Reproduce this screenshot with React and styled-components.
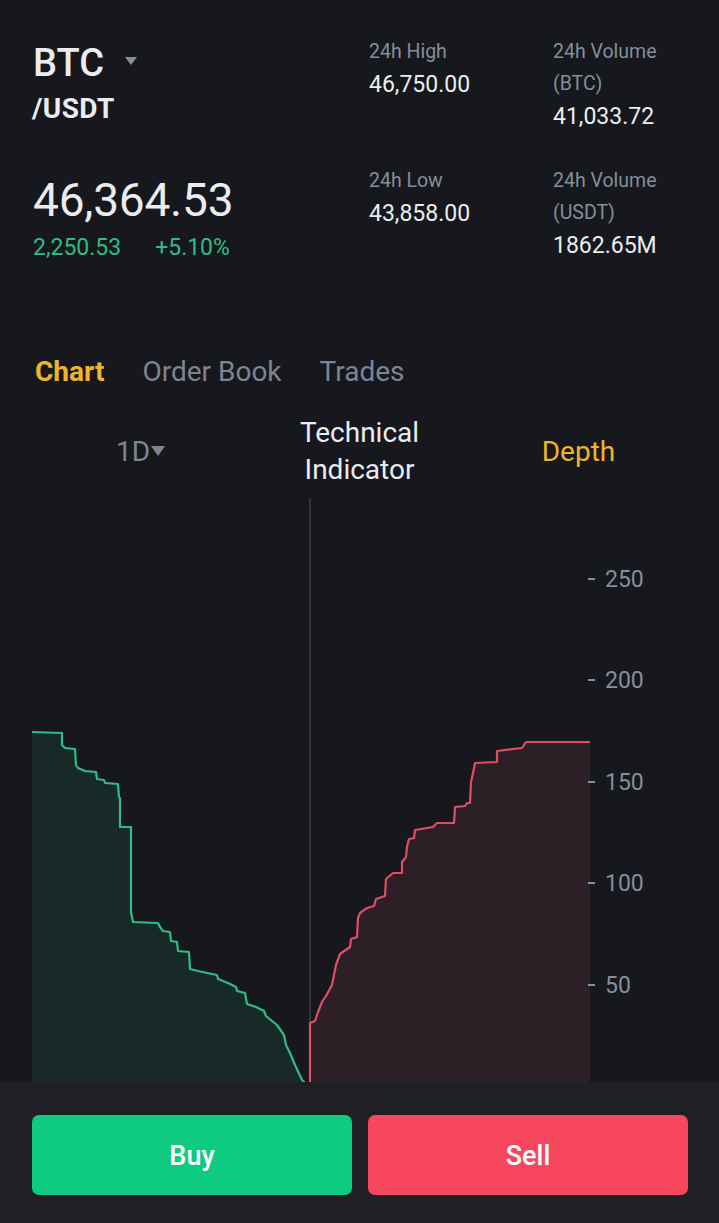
import React from 'react';
import styled, {createGlobalStyle} from 'styled-components';

const GlobalStyle = createGlobalStyle`
  html, body {
    margin: 0;
    padding: 0;
    background: #16181d;
  }
  * {
    box-sizing: border-box;
  }
`

const Page = styled.div`
  width: 719px;
  height: 1223px;
  background: #16181d;
  font-family: Roboto, "Noto Sans", sans-serif;
  color: #eaecef;
  display: flex;
  flex-direction: column;
  overflow: hidden;
`

const Header = styled.div`
  display: flex;
  align-items: flex-start;
  padding: 34px 0 0 33px;
  height: 355px;
`

const PairCol = styled.div`
  width: 336px;
  padding-top: 6px;
  display: flex;
  flex-direction: column;
`

const PairRow = styled.div`
  display: flex;
  align-items: flex-start;
`

const Base = styled.span`
  font-size: 38px;
  line-height: 46px;
  font-weight: 500;
`

const Caret = styled.span`
  width: 0;
  height: 0;
  margin: 17px 0 0 21px;
  border-left: 6.5px solid transparent;
  border-right: 6.5px solid transparent;
  border-top: 8px solid #848e9c;
`

const Quote = styled.div`
  font-size: 28px;
  line-height: 32px;
  font-weight: 700;
  letter-spacing: 0.4px;
  margin-top: 7px;
  margin-left: -1px;
`

const Price = styled.div`
  font-size: 46px;
  line-height: 54px;
  margin-top: 48px;
  letter-spacing: -0.2px;
`

const ChangeRow = styled.div`
  display: flex;
  gap: 34px;
  font-size: 23px;
  line-height: 28px;
  margin-top: 7px;
  color: #2ebd85;
`

const Stats = styled.div`
  display: grid;
  grid-template-columns: 184px 150px;
  align-content: start;
  row-gap: 32px;
  margin-top: 2px;
`

const Stat = styled.div`
  display: flex;
  flex-direction: column;
`

const Label = styled.div`
  font-size: 19.5px;
  line-height: 32px;
  color: #848e9c;
  padding-right: 20px;
`

const Value = styled.div`
  font-size: 23px;
  line-height: 32px;
  margin-top: 1px;
  color: #eaecef;
`

const Tabs = styled.div`
  display: flex;
  gap: 38px;
  padding-left: 35px;
  height: 57px;
`

const Tab = styled.div`
  font-size: 28px;
  line-height: 34px;
  font-weight: ${({active}) => active ? 700 : 400};
  color: ${({active}) => active ? '#ecb52a' : '#7d8594'};
`

const Toolbar = styled.div`
  display: grid;
  grid-template-columns: repeat(3, 1fr);
  padding: 0 31px;
  height: 78px;
  align-items: center;
  justify-items: center;
`

const ToolItem = styled.div`
  display: flex;
  align-items: flex-start;
  text-align: center;
  font-size: 28px;
  line-height: 37px;
  color: ${({tone}) => tone === 'gold' ? '#ecb52a' : tone === 'white' ? '#eaecef' : '#7d8594'};
`

const SmallCaret = styled.span`
  width: 0;
  height: 0;
  margin: 13px 0 0 1px;
  border-left: 7px solid transparent;
  border-right: 7px solid transparent;
  border-top: 10px solid #7d8594;
`

const ChartBox = styled.div`
  height: 584px;
  margin-top: 8px;
  svg {
    display: block;
  }
`

const AxisText = styled.text`
  font-family: Roboto, "Noto Sans", sans-serif;
  font-size: 23px;
  fill: #848e9c;
`

const BottomBar = styled.div`
  flex: 1;
  background: #1f2025;
  display: flex;
  gap: 16px;
  padding: 33px 31px 0 32px;
`

const TradeButton = styled.button`
  flex: 1;
  height: 80px;
  padding-top: 3px;
  border: none;
  border-radius: 7px;
  background: ${({side}) => side === 'buy' ? '#0ecb81' : '#f6465d'};
  color: #ffffff;
  font-family: Roboto, "Noto Sans", sans-serif;
  font-size: 27px;
  font-weight: 500;
`

const BIDS = [
    [32, 732], [62, 733], [62, 745], [65, 748], [75, 749], [76, 765], [78, 768], [85, 771], [96, 772],
    [97, 779], [104, 780], [105, 783], [118, 784], [119, 797], [120, 798], [120, 827], [131, 827],
    [131, 912], [133, 922], [158, 923], [160, 927], [163, 931], [170, 932], [171, 941], [177, 942],
    [178, 951], [189, 952], [190, 969], [198, 971], [217, 975], [218, 979], [228, 983], [236, 987],
    [237, 991], [245, 993], [247, 1004], [256, 1007], [264, 1011], [266, 1016], [272, 1021],
    [277, 1025], [284, 1035], [286, 1045], [290, 1053], [295, 1065], [302, 1080], [305, 1083],
]

const ASKS = [
    [310, 1083], [310, 1023], [315, 1021], [318, 1012], [322, 1002], [326, 996], [332, 985],
    [336, 965], [340, 954], [350, 947], [351, 939], [357, 937], [358, 918], [360, 913], [367, 908],
    [374, 906], [376, 899], [385, 896], [386, 879], [393, 873], [402, 873], [402, 862], [406, 857],
    [407, 847], [409, 839], [414, 838], [415, 830], [433, 827], [437, 823], [454, 823], [455, 807],
    [465, 806], [467, 803], [470, 803], [471, 782], [473, 773], [475, 763], [497, 762], [497, 751],
    [522, 748], [526, 742], [590, 742],
]

const TICKS = [[250, 579], [200, 680], [150, 782], [100, 883], [50, 985]]

const toPath = (pts) => pts.map((p, i) => `${i ? 'L' : 'M'}${p[0]} ${p[1]}`).join(' ')

const DepthChart = () => (
    <ChartBox>
        <svg width="719" height="584" viewBox="0 498 719 584">
            <path d={`${toPath(BIDS)} L305 1082 L32 1082 Z`} fill="#172a27"/>
            <path d={`${toPath(ASKS)} L590 1082 L310 1082 Z`} fill="#2c1f25"/>
            <line x1="310" y1="498" x2="310" y2="1082" stroke="#3b3e46" strokeWidth="1.5"/>
            <path d={toPath(BIDS)} fill="none" stroke="#2ebd85" strokeWidth="2.2" strokeLinejoin="round"/>
            <path d={toPath(ASKS)} fill="none" stroke="#e14d62" strokeWidth="2.2" strokeLinejoin="round"/>
            {TICKS.map(([v, y]) => (
                <g key={v}>
                    <line x1="588" y1={y} x2="595" y2={y} stroke="#848e9c" strokeWidth="2"/>
                    <AxisText x="605" y={y + 8}>{v}</AxisText>
                </g>
            ))}
        </svg>
    </ChartBox>
)

const STATS = [
    {label: '24h High', value: '46,750.00'},
    {label: '24h Volume (BTC)', value: '41,033.72'},
    {label: '24h Low', value: '43,858.00'},
    {label: '24h Volume (USDT)', value: '1862.65M'},
]

const App = () => {
    return (
        <Page>
            <GlobalStyle/>
            <Header>
                <PairCol>
                    <PairRow>
                        <Base>BTC</Base>
                        <Caret/>
                    </PairRow>
                    <Quote>/USDT</Quote>
                    <Price>46,364.53</Price>
                    <ChangeRow>
                        <span>2,250.53</span>
                        <span>+5.10%</span>
                    </ChangeRow>
                </PairCol>
                <Stats>
                    {STATS.map((s) => (
                        <Stat key={s.label}>
                            <Label>{s.label}</Label>
                            <Value>{s.value}</Value>
                        </Stat>
                    ))}
                </Stats>
            </Header>
            <Tabs>
                <Tab active>Chart</Tab>
                <Tab>Order Book</Tab>
                <Tab>Trades</Tab>
            </Tabs>
            <Toolbar>
                <ToolItem>1D<SmallCaret/></ToolItem>
                <ToolItem tone="white">Technical<br/>Indicator</ToolItem>
                <ToolItem tone="gold">Depth</ToolItem>
            </Toolbar>
            <DepthChart/>
            <BottomBar>
                <TradeButton side="buy">Buy</TradeButton>
                <TradeButton side="sell">Sell</TradeButton>
            </BottomBar>
        </Page>
    );
};

export default App;
